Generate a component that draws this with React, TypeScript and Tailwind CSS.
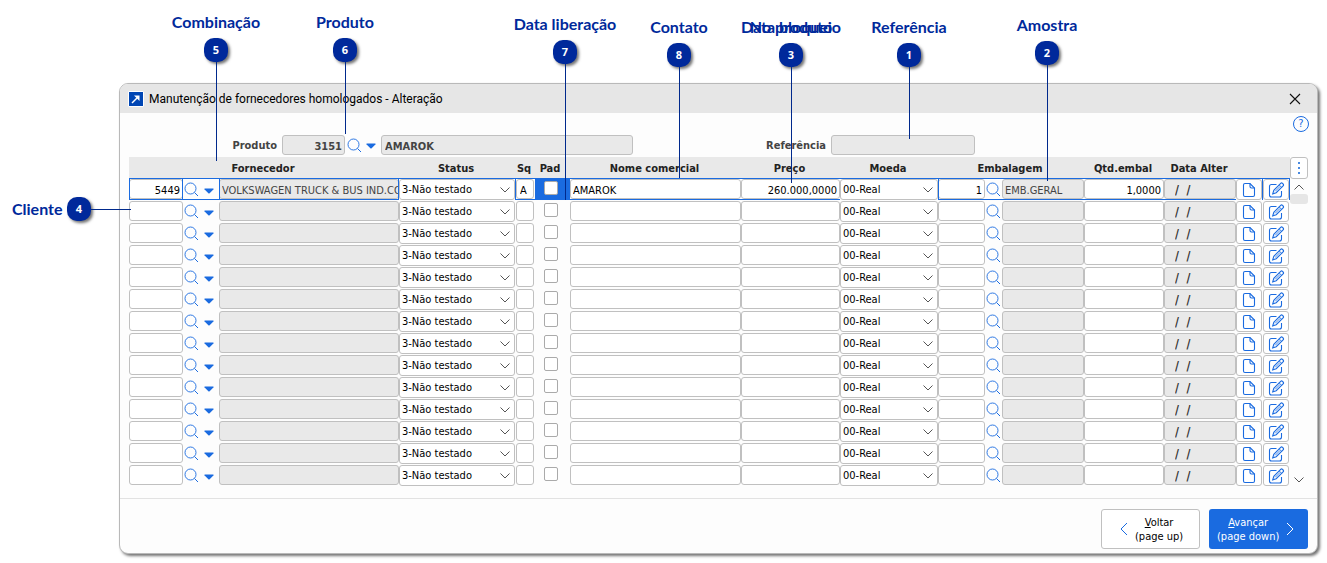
import React, { useState } from "react";

const callouts = [
  { n: 5, text: "Combinação", pos: "left-[216px] top-[12px]", line: "h-[99px]" },
  { n: 6, text: "Produto", pos: "left-[345px] top-[12px]", line: "h-[72px]" },
  { n: 7, text: "Data liberação", pos: "left-[565px] top-[14px]", line: "h-[136px]" },
  { n: 8, text: "Contato", pos: "left-[679px] top-[17px]", line: "h-[111px]" },
  { n: 3, text: "Data bloqueio", over: "No produto", pos: "left-[791px] top-[17px]", line: "h-[116px]" },
  { n: 1, text: "Referência", pos: "left-[909px] top-[17px]", line: "h-[72px]" },
  { n: 2, text: "Amostra", pos: "left-[1047px] top-[15px]", line: "h-[116px]" },
];

const firstRow = {
  code: "5449",
  supplier: "VOLKSWAGEN TRUCK & BUS IND.CO",
  sq: "A",
  name: "AMAROK",
  price: "260.000,0000",
  pack: "1",
  packName: "EMB.GERAL",
  qty: "1,0000",
};

const emptyRow = {
  code: "",
  supplier: "",
  sq: "",
  name: "",
  price: "",
  pack: "",
  packName: "",
  qty: "",
};

const rows = [firstRow, ...Array.from({ length: 13 }, () => emptyRow)];

function SearchIcon() {
  return (
    <svg width="15" height="15" viewBox="0 0 15 15" fill="none" stroke="#1a6be0" className="shrink-0">
      <circle cx="6.5" cy="6.5" r="5.5" strokeWidth="0.9" />
      <path d="M10.5 10.5 14 14" />
    </svg>
  );
}

function ArrowIcon() {
  return (
    <svg width="10" height="6" viewBox="0 0 10 6" fill="#1a6be0" className="shrink-0">
      <path d="M1 0.5h8q1 0.2 0.4 1L5.6 5.3q-0.6 0.5-1.2 0L0.6 1.5Q0 0.7 1 0.5z" />
    </svg>
  );
}

function PageIcon() {
  return (
    <svg width="14" height="16" viewBox="0 0 14 16" fill="none" stroke="#1a6be0" strokeWidth="1.1">
      <path d="M8 1.500H3Q1.500 1.500 1.500 3v10q0 1.500 1.500 1.500h8q1.500 0 1.500-1.500V6z" />
      <path d="M8 1.500v3Q8 6 9.500 6h3" />
    </svg>
  );
}

function EditIcon() {
  return (
    <svg width="17" height="16" viewBox="0 0 17 16" fill="none" stroke="#1a6be0" strokeWidth="1.1">
      <path d="M8.500 2.500H3.500Q1.500 2.500 1.500 4.500v8.500q0 2 2 2H11.500q2 0 2-2V9" />
      <path d="M12.700 1.400q0.900-0.900 1.800 0l0.600 0.600q0.900 0.900 0 1.800L8.200 10.700 4.700 11.800 5.800 8.300z" />
      <path d="M11.200 2.900l2.400 2.400M12.200 4.300 7.200 9.300" strokeWidth="0.8" />
    </svg>
  );
}

function Chevron({ className, d }: { className: string; d: string }) {
  return (
    <svg width="10" height="6" viewBox="0 0 10 6" fill="none" className={className}>
      <path d={d} />
    </svg>
  );
}

function Field({ value, label, className }: { value: string; label: string; className: string }) {
  return (
    <input
      type="text"
      aria-label={label}
      defaultValue={value}
      className={`block h-5 w-full min-w-0 rounded-[3px] border border-[#c0c0c0] pt-[2px] outline-none ${className}`}
    />
  );
}

function Combo({ value, label }: { value: string; label: string }) {
  return (
    <div className="relative">
      <select
        aria-label={label}
        className="block h-[21px] w-full appearance-none rounded-[3px] border border-[#c0c0c0] bg-white pt-px pl-[2px] text-black outline-none"
      >
        <option>{value}</option>
      </select>
      <Chevron
        d="M0.500 0.500 5 5 9.500 0.500"
        className="pointer-events-none absolute top-2 right-[5px] stroke-[#555]"
      />
    </div>
  );
}

// blue frame over the cells of the selected row
function Frame({ show, sides }: { show: boolean; sides: string }) {
  if (!show) return null;
  return <span className={`pointer-events-none absolute inset-x-0 -top-px h-[22px] border-[#1a6be0] ${sides}`} />;
}

function Badge({ n }: { n: number }) {
  return (
    <span className="flex size-6 shrink-0 items-center justify-center rounded-[10px] bg-[#00299b] text-white shadow-[2px_2px_3px_#0000008c]">
      {n}
    </span>
  );
}

function App() {
  const [pad, setPad] = useState<number[]>([]);

  const togglePad = (index: number) => {
    setPad(pad.includes(index) ? pad.filter((i) => i !== index) : [...pad, index]);
  };

  return (
    <div className="relative w-full min-w-[1200px] bg-white pt-[83px] pr-[9px] pb-[9px] pl-[119px] font-['DejaVu_Sans_Condensed','DejaVu_Sans',sans-serif] text-[11px] leading-[14px] text-black">
      <main className="overflow-hidden rounded-[9px] border border-[#b9b9b9] bg-[#fdfdfd] shadow-[2px_2px_3px_#0000008c]">
        <header className="flex h-[29px] items-center bg-[#e6e6e6] pr-4 pl-2">
          <svg width="16" height="16" viewBox="0 0 16 16">
            <path d="M0.500 0.500h15v15H0.500z" fill="#0046b4" stroke="#fff" />
            <path d="M4 12 10 6" fill="none" stroke="#fff" strokeWidth="1.500" />
            <path d="M6 4.500h5.500V10z" fill="#fff" />
          </svg>
          <h1 className="ml-[5px] flex-1 pt-px font-[Roboto,sans-serif] text-[12px] leading-4">
            Manutenção de fornecedores homologados - Alteração
          </h1>
          <button type="button" aria-label="Fechar">
            <svg width="12" height="12" viewBox="0 0 12 12" stroke="#111" strokeWidth="1.100">
              <path d="M1 1l10 10M11 1 1 11" />
            </svg>
          </button>
        </header>

        <div className="flex items-start pr-2 pl-[9px]">
          <div className="flex flex-1 items-center pt-[22px] font-bold text-[#444]">
            <label htmlFor="produto" className="w-[148px] pt-[2px] text-right">
              Produto
            </label>
            <input
              id="produto"
              defaultValue="3151"
              className="ml-[5px] h-5 w-[63px] rounded-[3px] border border-[#c0c0c0] bg-[#e9e9e9] px-[2px] pt-[2px] text-right"
            />
            <button type="button" aria-label="Pesquisar produto" className="ml-[2px]">
              <SearchIcon />
            </button>
            <button type="button" aria-label="Opções do produto" className="ml-1 pt-[2px]">
              <ArrowIcon />
            </button>
            <input
              aria-label="Nome do produto"
              defaultValue="AMAROK"
              className="ml-[5px] h-5 w-[252px] rounded-[3px] border border-[#c0c0c0] bg-[#e9e9e9] px-[3px] pt-[2px]"
            />
            <label htmlFor="referencia" className="w-[193px] pt-[2px] text-right">
              Referência
            </label>
            <input
              id="referencia"
              className="ml-[5px] h-5 w-[144px] rounded-[3px] border border-[#c0c0c0] bg-[#e9e9e9] px-[3px] pt-[2px]"
            />
          </div>
          <button
            type="button"
            aria-label="Ajuda"
            className="mt-[3px] flex size-4 items-center justify-center rounded-full border border-[#1a6be0] text-[#1a6be0]"
          >
            ?
          </button>
        </div>

        <div className="mt-[2px] flex pr-[9px] pl-[9px]">
          <table className="w-full table-fixed border-collapse">
            <colgroup>
              <col className="w-[54px]" />
              <col className="w-[36px]" />
              <col className="w-[180px]" />
              <col className="w-[116px]" />
              <col className="w-[20px]" />
              <col className="w-[35px]" />
              <col />
              <col className="w-[99px]" />
              <col className="w-[98px]" />
              <col className="w-[47px]" />
              <col className="w-[17px]" />
              <col className="w-[82px]" />
              <col className="w-[80px]" />
              <col className="w-[72px]" />
              <col className="w-[27px]" />
              <col className="w-[27px]" />
            </colgroup>
            <thead>
              <tr className="h-[22px] bg-[#e9e9e9] text-[#222] *:pt-[2px] *:pr-[2px]">
                <th colSpan={3}>Fornecedor</th>
                <th>Status</th>
                <th>Sq</th>
                <th>
                  <span className="mr-[3px]">Pad</span>
                </th>
                <th>Nome comercial</th>
                <th>Preço</th>
                <th>Moeda</th>
                <th colSpan={3}>Embalagem</th>
                <th>Qtd.embal</th>
                <th>Data Alter</th>
                <th colSpan={2}></th>
              </tr>
            </thead>
            <tbody>
              {rows.map((row, i) => {
                const first = i === 0;
                return (
                  <tr key={i} className="h-[22px] align-top">
                    <td className="relative">
                      <Field label="Fornecedor" value={row.code} className="bg-white px-[2px] text-right" />
                      <Frame show={first} sides="border" />
                    </td>
                    <td className="relative">
                      <div className="flex h-5 items-center pl-px">
                        <button type="button" aria-label="Pesquisar fornecedor">
                          <SearchIcon />
                        </button>
                        <button type="button" aria-label="Opções do fornecedor" className="ml-[5px] pt-[3px]">
                          <ArrowIcon />
                        </button>
                      </div>
                      <Frame show={first} sides="border-y" />
                    </td>
                    <td className="relative">
                      <Field label="Nome do fornecedor" value={row.supplier} className="bg-[#e9e9e9] pl-[2px] text-[#444]" />
                      <Frame show={first} sides="border" />
                    </td>
                    <td className="relative">
                      <Combo label="Status" value="3-Não testado" />
                      <Frame show={first} sides="border-t" />
                    </td>
                    <td className="relative px-px">
                      <Field label="Sq" value={row.sq} className="bg-white px-[3px]" />
                      <Frame show={first} sides="border-y border-l" />
                    </td>
                    <td className="relative">
                      {first && <span className="absolute inset-x-0 -top-px h-[22px] bg-[#1a6be0]" />}
                      <input
                        type="checkbox"
                        aria-label="Pad"
                        checked={pad.includes(i)}
                        onChange={() => togglePad(i)}
                        className="relative mt-[2px] ml-[9px] block size-[14px] appearance-none rounded-[2px] border border-[#aaa] bg-white checked:bg-[#1a6be0]"
                      />
                    </td>
                    <td className="relative">
                      <Field label="Nome comercial" value={row.name} className="bg-white px-[2px]" />
                      <Frame show={first} sides="border-y" />
                    </td>
                    <td className="relative">
                      <Field label="Preço" value={row.price} className="bg-white px-[2px] text-right" />
                      <Frame show={first} sides="border-y" />
                    </td>
                    <td className="relative">
                      <Combo label="Moeda" value="00-Real" />
                      <Frame show={first} sides="border-t" />
                    </td>
                    <td className="relative">
                      <Field label="Embalagem" value={row.pack} className="bg-white px-[2px] text-right" />
                      <Frame show={first} sides="border-y border-l" />
                    </td>
                    <td className="relative">
                      <button type="button" aria-label="Pesquisar embalagem" className="flex h-5 items-center pl-px">
                        <SearchIcon />
                      </button>
                      <Frame show={first} sides="border-y" />
                    </td>
                    <td className="relative">
                      <Field label="Nome da embalagem" value={row.packName} className="bg-[#e9e9e9] px-[2px] text-[#444]" />
                      <Frame show={first} sides="border-y" />
                    </td>
                    <td className="relative">
                      <Field label="Qtd.embal" value={row.qty} className="bg-white px-[2px] text-right" />
                      <Frame show={first} sides="border-y" />
                    </td>
                    <td className="relative">
                      <Field
                        label="Data Alter"
                        value="/  /"
                        className="bg-[#e9e9e9] px-[10px] text-[12px] font-bold text-[#333]"
                      />
                      <Frame show={first} sides="border-y" />
                    </td>
                    <td className="relative">
                      <button
                        type="button"
                        aria-label="Documento"
                        className="flex h-[21px] w-[26px] items-center justify-center rounded-[3px] border border-[#c0c0c0] bg-white"
                      >
                        <PageIcon />
                      </button>
                      <Frame show={first} sides="border-t border-r" />
                    </td>
                    <td className="relative">
                      <button
                        type="button"
                        aria-label="Editar"
                        className="flex h-[21px] w-[26px] items-center justify-center rounded-[3px] border border-[#c0c0c0] bg-white"
                      >
                        <EditIcon />
                      </button>
                      <Frame show={first} sides="border-t border-r" />
                    </td>
                  </tr>
                );
              })}
            </tbody>
          </table>

          <div className="flex w-[18px] shrink-0 flex-col items-center pb-1">
            <button
              type="button"
              aria-label="Mais opções"
              className="flex h-[22px] w-[18px] flex-col items-center justify-center gap-[3px] rounded-[3px] border border-[#c0c0c0] bg-white"
            >
              <span className="size-[2px] bg-[#4a8ae0]" />
              <span className="size-[2px] bg-[#4a8ae0]" />
              <span className="size-[2px] bg-[#4a8ae0]" />
            </button>
            <Chevron d="M0.500 5.500 5 1 9.500 5.500" className="mt-[5px] stroke-[#555]" />
            <div className="mt-[4px] h-[10px] w-[18px] rounded-[3px] bg-[#e6e6e6]" />
            <Chevron d="M0.500 0.500 5 5 9.500 0.500" className="mt-auto stroke-[#555]" />
          </div>
        </div>

        <footer className="mt-[11px] flex justify-end gap-[9px] border-t border-[#e2e2e2] pt-[10px] pr-[9px] pb-1">
          <button
            type="button"
            className="flex h-10 w-[99px] items-center gap-[7px] rounded-[3px] border border-[#c0c0c0] bg-white pl-[18px]"
          >
            <svg width="8" height="14" viewBox="0 0 8 14" fill="none" stroke="#1a6be0">
              <path d="M7 1 1 7l6 6" />
            </svg>
            <span className="pt-[2px]">
              <u>V</u>oltar
              <br />
              (page up)
            </span>
          </button>
          <button
            type="button"
            className="flex h-10 w-[99px] items-center gap-[7px] rounded-[3px] bg-[#1a6be0] pl-2 text-white"
          >
            <span className="pt-[2px]">
              <u>A</u>vançar
              <br />
              (page down)
            </span>
            <svg width="8" height="14" viewBox="0 0 8 14" fill="none" stroke="#fff">
              <path d="M1 1l6 6-6 6" />
            </svg>
          </button>
        </footer>
      </main>

      {callouts.map((c) => (
        <div
          key={c.n}
          className={`pointer-events-none absolute -ml-[75px] flex w-[150px] flex-col items-center font-['Open_Sans',sans-serif] font-bold ${c.pos}`}
        >
          <div className="grid h-[26px] justify-items-center font-[Lato,sans-serif] text-[16px] leading-5 whitespace-nowrap text-[#00299b]">
            <span className="col-start-1 row-start-1">{c.text}</span>
            {c.over && <span className="col-start-1 row-start-1">{c.over}</span>}
          </div>
          <Badge n={c.n} />
          <span className={`ml-px w-px bg-[#00298c] ${c.line}`} />
        </div>
      ))}
      <div className="pointer-events-none absolute top-[197px] left-[12px] flex w-[119px] items-center font-['Open_Sans',sans-serif] font-bold">
        <span className="w-[55px] font-[Lato,sans-serif] text-[16px] leading-5 text-[#00299b]">Cliente</span>
        <Badge n={4} />
        <span className="h-px flex-1 bg-[#00298c]" />
      </div>
    </div>
  );
}

export default App;
